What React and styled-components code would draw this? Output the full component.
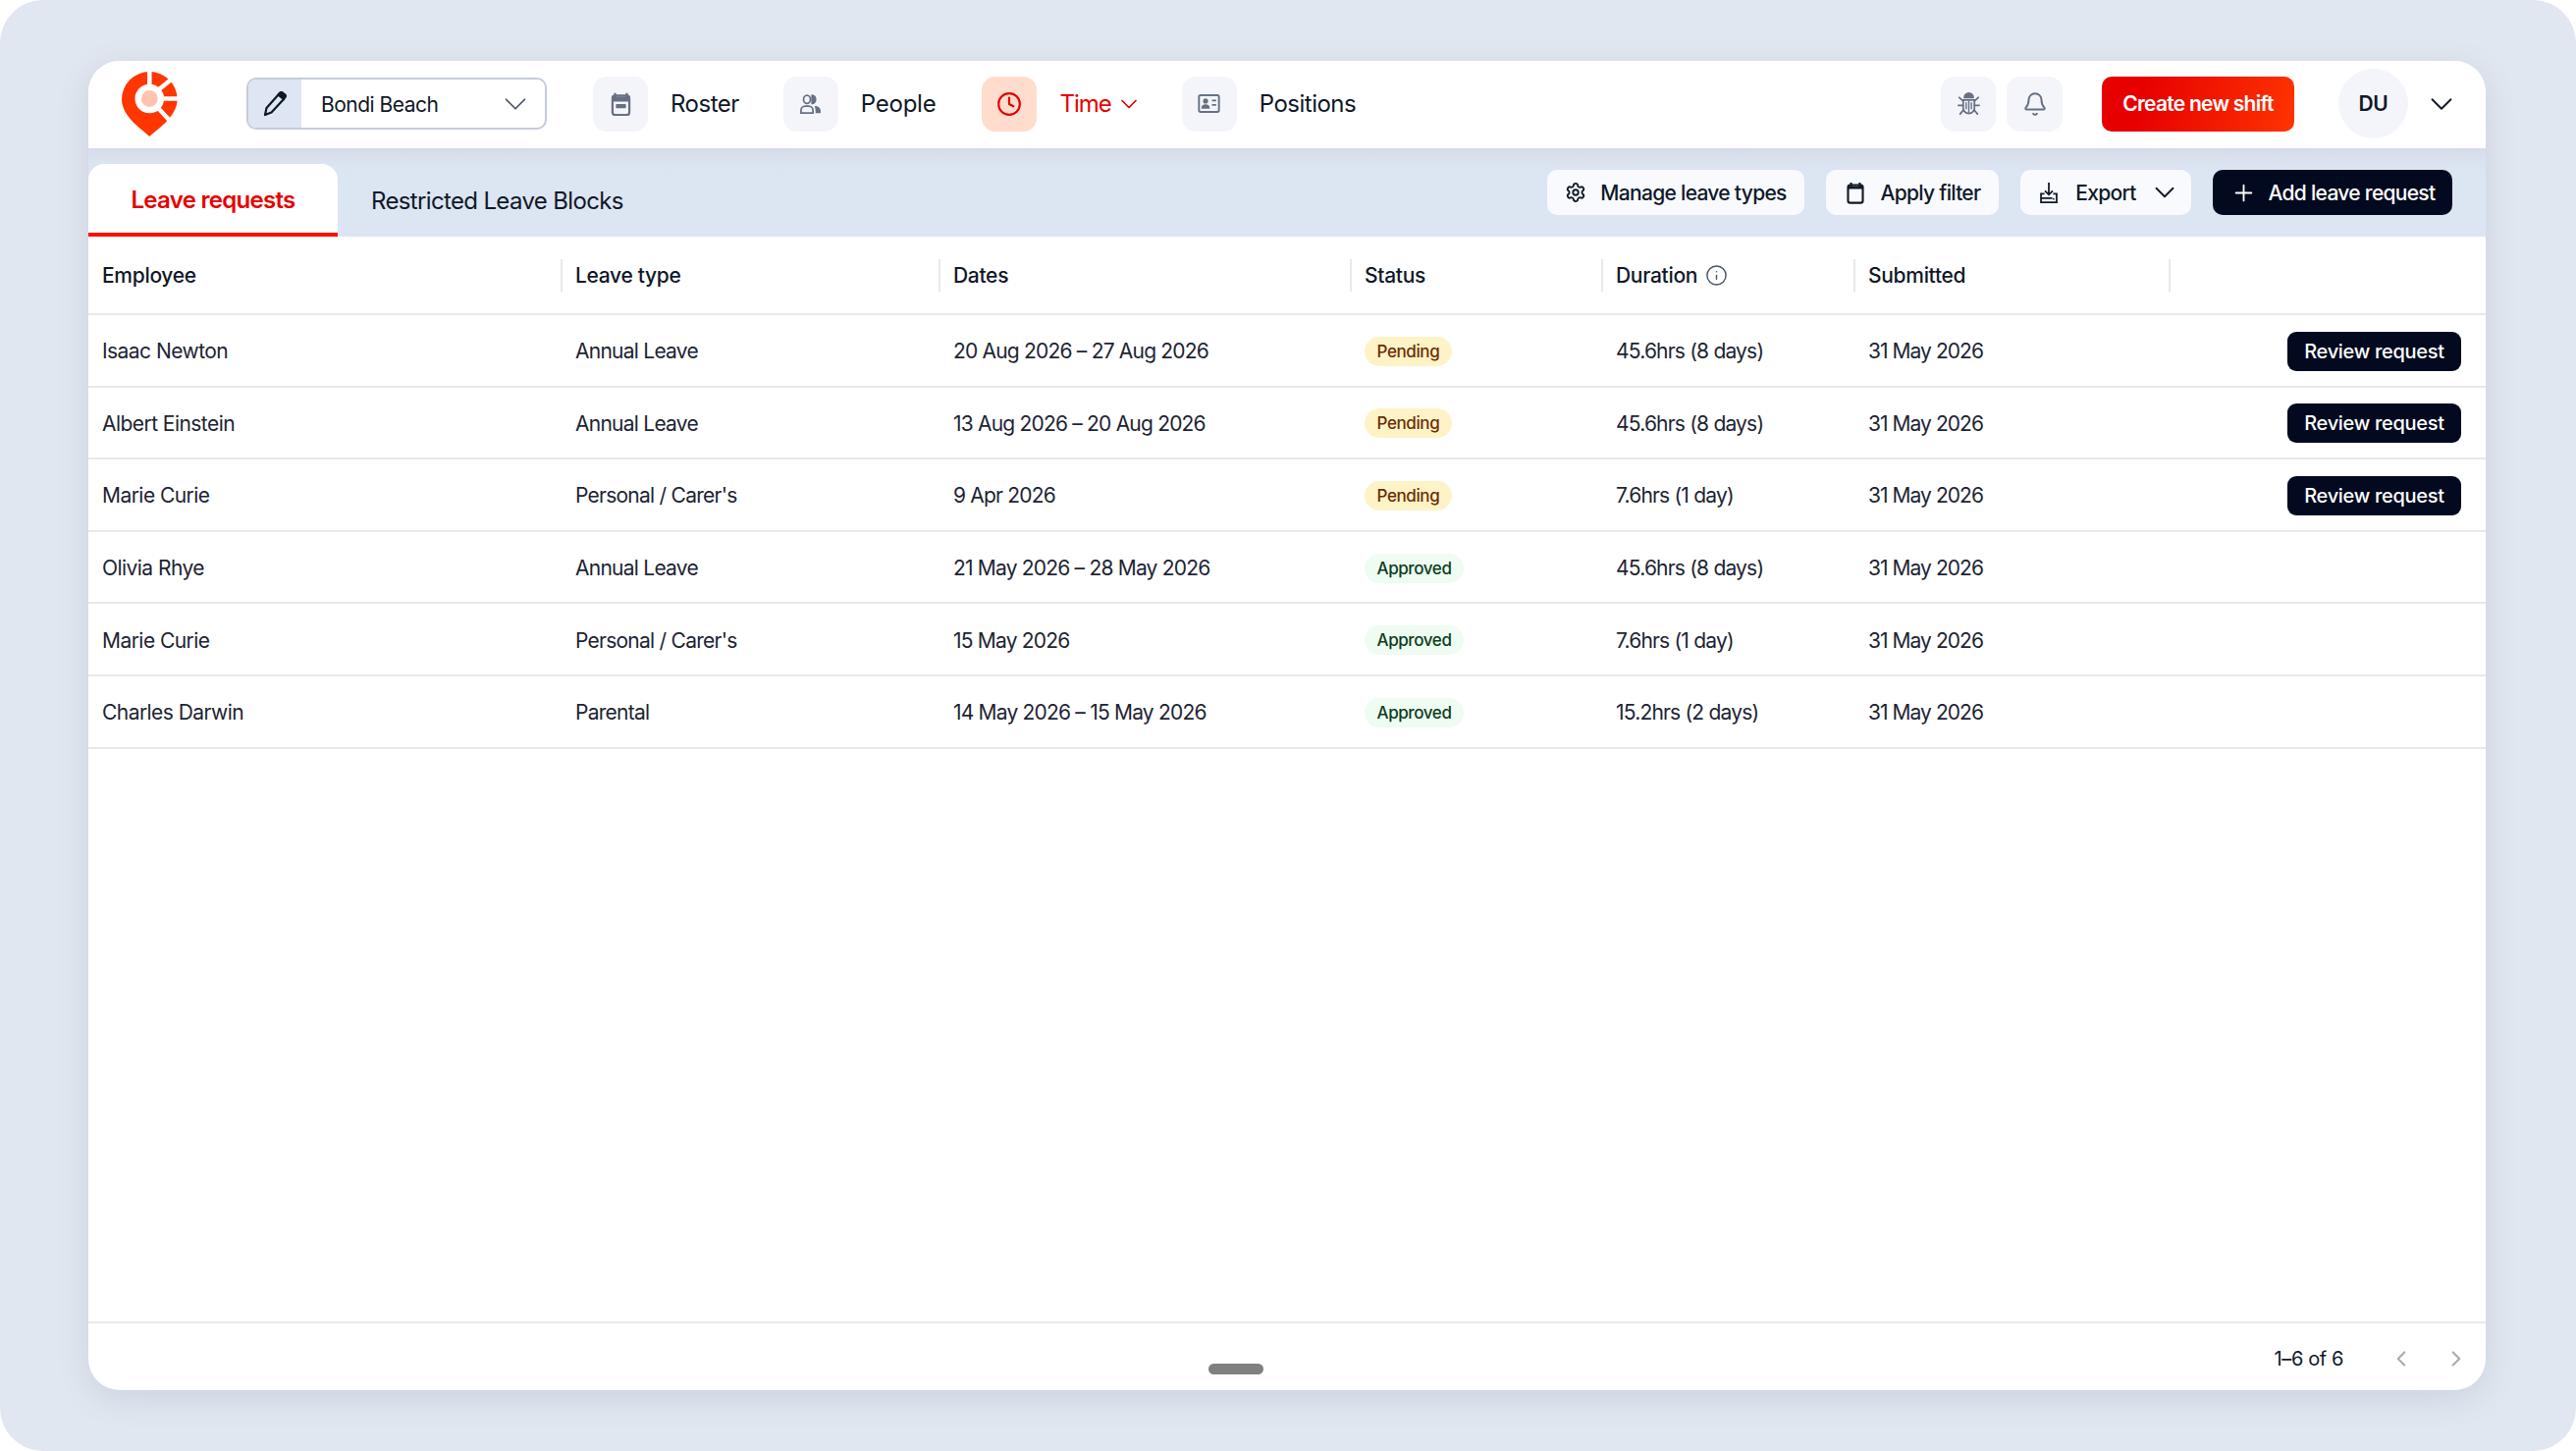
import styled, { createGlobalStyle } from 'styled-components';
import { Bell, ChevronDown, ChevronLeft, ChevronRight, Clock, Info, Plus, Settings } from 'lucide-react';

const GlobalStyle = createGlobalStyle`
  html, body { margin: 0; padding: 0; background: #fff; }
  * { box-sizing: border-box; }
  body { font-family: Inter, "Liberation Sans", sans-serif; color: #101828; }
`;

const Page = styled.div`
  width: 2624px;
  height: 1478px;
  padding: 62px 92px 62px 90px;
  background: #e1e7f0;
  border-radius: 44px;
`;

const Card = styled.div`
  position: relative;
  height: 1354px;
  display: flex;
  flex-direction: column;
  background: #fff;
  border-radius: 32px;
  overflow: hidden;
  box-shadow: 0 8px 32px rgba(90, 105, 140, 0.16);
`;

const Header = styled.header`
  height: 89px;
  flex: none;
  display: flex;
  align-items: center;
  padding: 0 26px 2px 34px;
  box-shadow: 0 4px 14px rgba(60, 70, 100, 0.04);
  z-index: 1;
  background: #fff;
`;

const LogoMark = styled.svg`
  width: 57px;
  height: 66px;
  flex: none;
  margin-right: 70px;
`;

const Selector = styled.div`
  width: 306px;
  height: 53px;
  flex: none;
  display: flex;
  align-items: stretch;
  border: 2px solid #c5ccd8;
  border-radius: 10px;
  overflow: hidden;
  margin-right: 47px;
`;

const SelectorIcon = styled.div`
  width: 54px;
  display: flex;
  align-items: center;
  justify-content: center;
  background: #dde6f2;
`;

const SelectorValue = styled.div`
  flex: 1;
  display: flex;
  align-items: center;
  justify-content: space-between;
  padding: 1px 11px 0 20px;
  font-size: 21px;
  letter-spacing: -0.5px;
`;

const Nav = styled.nav`
  display: flex;
  align-items: center;
`;

const NavItem = styled.div`
  display: flex;
  align-items: center;
  margin-right: ${(p) => p.$gap}px;
  color: ${(p) => (p.$active ? '#e60000' : '#101828')};
`;

const NavLabel = styled.span`
  margin-left: 23px;
  font-size: 24px;
  letter-spacing: ${(p) => (p.$ls === undefined ? -0.5 : p.$ls)}px;
`;

const NavCaret = styled.span`
  display: flex;
  margin-left: 4px;
`;

const IconTile = styled.div`
  width: ${(p) => p.$w || 56}px;
  height: 56px;
  flex: none;
  display: flex;
  align-items: center;
  justify-content: center;
  border-radius: 14px;
  background: ${(p) => (p.$active ? '#ffdccd' : '#f3f5fa')};
  color: ${(p) => (p.$active ? '#e60000' : '#667085')};
`;

const HeaderRight = styled.div`
  margin-left: auto;
  display: flex;
  align-items: center;
  gap: 11px;
`;

const CreateButton = styled.button`
  width: 196px;
  height: 56px;
  margin: 0 45px 0 40px;
  border: none;
  border-radius: 10px;
  background: linear-gradient(100deg, #e60000 20%, #ff3300 100%);
  color: #fff;
  font: 600 21px Inter, sans-serif;
  letter-spacing: -0.75px;
`;

const Avatar = styled.div`
  width: 71px;
  height: 71px;
  flex: none;
  display: flex;
  align-items: center;
  justify-content: center;
  border-radius: 50%;
  background: #f3f5fa;
  font-size: 21px;
  font-weight: 600;
  letter-spacing: -0.3px;
`;

const AvatarCaret = styled.div`
  display: flex;
  margin-left: 15px;
  color: #101828;
`;

const TabBar = styled.div`
  height: 90px;
  flex: none;
  display: flex;
  align-items: flex-end;
  justify-content: space-between;
  padding-right: 34px;
  background: linear-gradient(#d9e1ed, #dce5f2 30%);
`;

const Tabs = styled.div`
  display: flex;
`;

const Tab = styled.div`
  height: 74px;
  display: flex;
  align-items: center;
  justify-content: center;
  padding-top: ${(p) => (p.$active ? '3px' : '0')};
  width: ${(p) => (p.$active ? '254px' : 'auto')};
  margin-left: ${(p) => (p.$active ? '0' : '34px')};
  border-radius: 16px 16px 0 0;
  font-size: 24px;
  letter-spacing: ${(p) => (p.$active ? '-0.7px' : '-0.65px')};
  ${(p) => p.$active && `
    background: #fff;
    color: #e60000;
    font-weight: 600;
    border-bottom: 4px solid #ff0d00;
  `}
`;

const Actions = styled.div`
  display: flex;
  gap: 22px;
  align-self: flex-start;
  margin-top: 22px;
`;

const ActionButton = styled.button`
  height: 46px;
  width: ${(p) => p.$w}px;
  display: flex;
  align-items: center;
  justify-content: center;
  gap: ${(p) => p.$gap || 14}px;
  padding: 0 0 0 ${(p) => p.$pl || 0}px;
  border: none;
  border-radius: 10px;
  background: ${(p) => (p.$dark ? '#030a1f' : '#f8fafd')};
  color: ${(p) => (p.$dark ? '#fff' : '#101828')};
  font: 500 21px Inter, sans-serif;
  letter-spacing: -0.7px;
`;

const ExportLabel = styled.span`
  margin-left: 5px;
`;

const Columns = `
  display: grid;
  grid-template-columns: 483px 385px 419px 256px 257px 321px 1fr;
`;

const TableHead = styled.div`
  ${Columns}
  height: 80px;
  flex: none;
  align-items: center;
  border-bottom: 2px solid #e8e9ec;
`;

const HeadCell = styled.div`
  height: 33px;
  display: flex;
  align-items: center;
  gap: 8px;
  padding-left: ${(p) => (p.$first ? '14px' : '13px')};
  border-right: ${(p) => (p.$last ? 'none' : '2px solid #e8e9ec')};
  font-size: 21px;
  font-weight: 500;
  letter-spacing: -0.3px;
`;

const TableBody = styled.div`
  flex: 1;
`;

const Row = styled.div`
  ${Columns}
  height: 73.6px;
  padding-top: 2px;
  align-items: center;
  border-bottom: 2px solid #e8e9ec;
  font-size: 21px;
  color: #1d2433;
`;

const Cell = styled.div`
  padding-left: ${(p) => (p.$first ? '14px' : '13px')};
  letter-spacing: ${(p) => p.$ls}px;
`;

const ActionCell = styled.div`
  display: flex;
  justify-content: flex-end;
  padding-right: 25px;
`;

const Badge = styled.span`
  display: inline-flex;
  align-items: center;
  height: 30px;
  padding: 0 12.5px;
  border-radius: 15px;
  font-size: 17px;
  font-weight: 500;
  letter-spacing: -0.4px;
  background: ${(p) => (p.$approved ? '#eefcf1' : '#fef3c7')};
  color: ${(p) => (p.$approved ? '#0c3d22' : '#6b2d06')};
`;

const ReviewButton = styled.button`
  width: 177px;
  height: 40px;
  padding: 0;
  border: none;
  border-radius: 9px;
  background: #030a1f;
  color: #fff;
  font: 500 20px Inter, sans-serif;
  letter-spacing: -0.3px;
`;

const Footer = styled.div`
  height: 70px;
  flex: none;
  display: flex;
  align-items: center;
  justify-content: flex-end;
  padding: 3px 17px 0 0;
  border-top: 2px solid #e8e9ec;
  font-size: 20px;
  letter-spacing: -0.4px;
`;

const PageCount = styled.span`
  margin-right: 46px;
`;

const PageArrow = styled.div`
  display: flex;
  color: #a8adb5;
  margin-left: ${(p) => (p.$next ? '30px' : '0')};
`;

const Handle = styled.div`
  position: absolute;
  left: 1141px;
  bottom: 16px;
  width: 56px;
  height: 11px;
  border-radius: 6px;
  background: #808080;
`;

const Logo = () => (
  <LogoMark viewBox="0 0 57 66">
    <path d="M28.3 66C24 61 0 47 0 28.3a28.3 28.3 0 0 1 56.6 0C56.6 47 33 61 28.3 66Z" fill="#ff3600" />
    <circle cx="28.3" cy="27.5" r="14.8" fill="#fff" />
    <circle cx="28.3" cy="27.5" r="8.4" fill="#ffc4b0" />
    <g stroke="#fff" strokeWidth="4.5">
      <path d="M28.3 -1V14" />
      <path d="M38 18L54 5" />
      <path d="M42 27.5H58" />
      <path d="M37 37L51 52" />
    </g>
  </LogoMark>
);

const Pencil = () => (
  <svg width="24" height="26" viewBox="0 0 24 26" fill="none" stroke="#101828" strokeWidth="2.2" strokeLinejoin="round">
    <path d="M2 24l1.5-7L15.5 3.5l5.5 4.5L8.5 21.5Z" />
    <path d="M15.5 3.5l1.5-1.8a2 2 0 0 1 2.8-.2l2.3 1.9a2 2 0 0 1 .2 2.8L21 8Z" fill="#101828" />
  </svg>
);

const CalendarFilled = () => (
  <svg width="21" height="24" viewBox="0 0 24 28" fill="none">
    <path d="M5 1v5M19 1v5" stroke="#667085" strokeWidth="2.6" />
    <rect x="2" y="4" width="20" height="23" rx="3" stroke="#667085" strokeWidth="2.6" />
    <path d="M3 5h18v6H3Z" fill="#667085" />
    <rect x="6" y="14" width="12" height="5" rx="1" fill="#667085" />
  </svg>
);

const PeopleIcon = () => (
  <svg width="23" height="20" viewBox="0 0 26 23" fill="none" stroke="#667085" strokeWidth="2">
    <ellipse cx="9" cy="6" rx="4" ry="4.8" />
    <path d="M15 1.200a4 4.800 0 0 1 0 9.600Z" fill="#667085" />
    <path d="M2 22v-3a5 5 0 0 1 5-5h4a5 5 0 0 1 5 5v3Z" />
    <path d="M18 14a6 6 0 0 1 7 5v3h-6v-4Z" fill="#667085" stroke="none" />
  </svg>
);

const IdCard = () => (
  <svg width="23" height="19" viewBox="0 0 26 22" fill="none">
    <rect x="1.2" y="1.2" width="23.6" height="19.6" rx="2" stroke="#667085" strokeWidth="2.2" />
    <circle cx="9" cy="8" r="3" fill="#667085" />
    <path d="M4 17c0-3.500 2-5 5-5s5 1.500 5 5Z" fill="#667085" />
    <path d="M16.500 7.500h5M16.500 12.500h5" stroke="#667085" strokeWidth="2" />
  </svg>
);

const Bug = () => (
  <svg width="23" height="25" viewBox="0 0 26 28" fill="none" stroke="#667085" strokeWidth="2" strokeLinecap="round">
    <path d="M8 7a5 5 0 0 1 10 0Z" fill="#667085" />
    <path d="M6.500 10h13v9a6.500 6.500 0 0 1-13 0Z" />
    <path d="M13 11v13M10 13v7M16 13v7" strokeWidth="1.6" />
    <path d="M6.500 11L2 7M19.500 11L24 7M6.500 16H1M19.500 16H25M7 21l-4 5M19 21l4 5" />
  </svg>
);

const CalendarOutline = () => (
  <svg width="18" height="23" viewBox="0 0 20 26" fill="none">
    <path d="M5 1v5M15 1v5" stroke="#101828" strokeWidth="2.4" />
    <rect x="1.500" y="4" width="17" height="20.500" rx="2.500" stroke="#101828" strokeWidth="2.400" />
    <path d="M2 5h16v3.500H2Z" fill="#101828" />
  </svg>
);

const ExportIcon = () => (
  <svg width="20" height="23" viewBox="0 0 22 26" fill="none" stroke="#101828" strokeWidth="2">
    <path d="M11 1v14M6.500 10.500L11 15l4.500-4.500" />
    <path d="M6 14H2v10h18V14h-4" />
    <path d="M2 19h13" />
    <circle cx="16.500" cy="20" r="1" fill="#101828" stroke="none" />
  </svg>
);

const rows = [
  ['Isaac Newton', 'Annual Leave', '20 Aug 2026 – 27 Aug 2026', 'Pending', '45.6hrs (8 days)'],
  ['Albert Einstein', 'Annual Leave', '13 Aug 2026 – 20 Aug 2026', 'Pending', '45.6hrs (8 days)'],
  ['Marie Curie', "Personal / Carer's", '9 Apr 2026', 'Pending', '7.6hrs (1 day)'],
  ['Olivia Rhye', 'Annual Leave', '21 May 2026 – 28 May 2026', 'Approved', '45.6hrs (8 days)'],
  ['Marie Curie', "Personal / Carer's", '15 May 2026', 'Approved', '7.6hrs (1 day)'],
  ['Charles Darwin', 'Parental', '14 May 2026 – 15 May 2026', 'Approved', '15.2hrs (2 days)'],
];

function App() {
  return (
    <>
      <GlobalStyle />
      <Page>
        <Card>
          <Header>
            <Logo />
            <Selector>
              <SelectorIcon>
                <Pencil />
              </SelectorIcon>
              <SelectorValue>
                Bondi Beach
                <ChevronDown size={38} strokeWidth={1.1} color="#475467" />
              </SelectorValue>
            </Selector>
            <Nav>
              <NavItem $gap={45}>
                <IconTile>
                  <CalendarFilled />
                </IconTile>
                <NavLabel>Roster</NavLabel>
              </NavItem>
              <NavItem $gap={47}>
                <IconTile>
                  <PeopleIcon />
                </IconTile>
                <NavLabel $ls={-0.25}>People</NavLabel>
              </NavItem>
              <NavItem $gap={40} $active>
                <IconTile $active>
                  <Clock size={26} strokeWidth={2} />
                </IconTile>
                <NavLabel $ls={-1}>Time</NavLabel>
                <NavCaret>
                  <ChevronDown size={28} strokeWidth={1.5} />
                </NavCaret>
              </NavItem>
              <NavItem $gap={0}>
                <IconTile>
                  <IdCard />
                </IconTile>
                <NavLabel>Positions</NavLabel>
              </NavItem>
            </Nav>
            <HeaderRight>
              <IconTile $w={56}>
                <Bug />
              </IconTile>
              <IconTile $w={57}>
                <Bell size={26} strokeWidth={1.8} />
              </IconTile>
            </HeaderRight>
            <CreateButton>Create new shift</CreateButton>
            <Avatar>DU</Avatar>
            <AvatarCaret>
              <ChevronDown size={38} strokeWidth={1.2} />
            </AvatarCaret>
          </Header>
          <TabBar>
            <Tabs>
              <Tab $active>Leave requests</Tab>
              <Tab>Restricted Leave Blocks</Tab>
            </Tabs>
            <Actions>
              <ActionButton $w={262}>
                <Settings size={22} strokeWidth={2} />
                Manage leave types
              </ActionButton>
              <ActionButton $w={176} $gap={17} $pl={2}>
                <CalendarOutline />
                Apply filter
              </ActionButton>
              <ActionButton $w={174} $gap={12} $pl={9}>
                <ExportIcon />
                <ExportLabel>Export</ExportLabel>
                <ChevronDown size={34} strokeWidth={1.3} />
              </ActionButton>
              <ActionButton $w={244} $dark $gap={12}>
                <Plus size={27} strokeWidth={1.6} />
                Add leave request
              </ActionButton>
            </Actions>
          </TabBar>
          <TableHead>
            <HeadCell $first>Employee</HeadCell>
            <HeadCell>Leave type</HeadCell>
            <HeadCell>Dates</HeadCell>
            <HeadCell>Status</HeadCell>
            <HeadCell>
              Duration
              <Info size={23} strokeWidth={1.5} color="#475467" />
            </HeadCell>
            <HeadCell>Submitted</HeadCell>
            <HeadCell $last />
          </TableHead>
          <TableBody>
            {rows.map((row, i) => (
              <Row key={i}>
                <Cell $first $ls={-0.55}>{row[0]}</Cell>
                <Cell $ls={-0.75}>{row[1]}</Cell>
                <Cell $ls={-0.8}>{row[2]}</Cell>
                <Cell>
                  <Badge $approved={row[3] === 'Approved'}>{row[3]}</Badge>
                </Cell>
                <Cell $ls={-0.8}>{row[4]}</Cell>
                <Cell $ls={-0.95}>31 May 2026</Cell>
                <ActionCell>{row[3] === 'Pending' && <ReviewButton>Review request</ReviewButton>}</ActionCell>
              </Row>
            ))}
          </TableBody>
          <Footer>
            <PageCount>1–6 of 6</PageCount>
            <PageArrow>
              <ChevronLeft size={26} strokeWidth={2} />
            </PageArrow>
            <PageArrow $next>
              <ChevronRight size={26} strokeWidth={2} />
            </PageArrow>
          </Footer>
          <Handle />
        </Card>
      </Page>
    </>
  );
}

export default App;
